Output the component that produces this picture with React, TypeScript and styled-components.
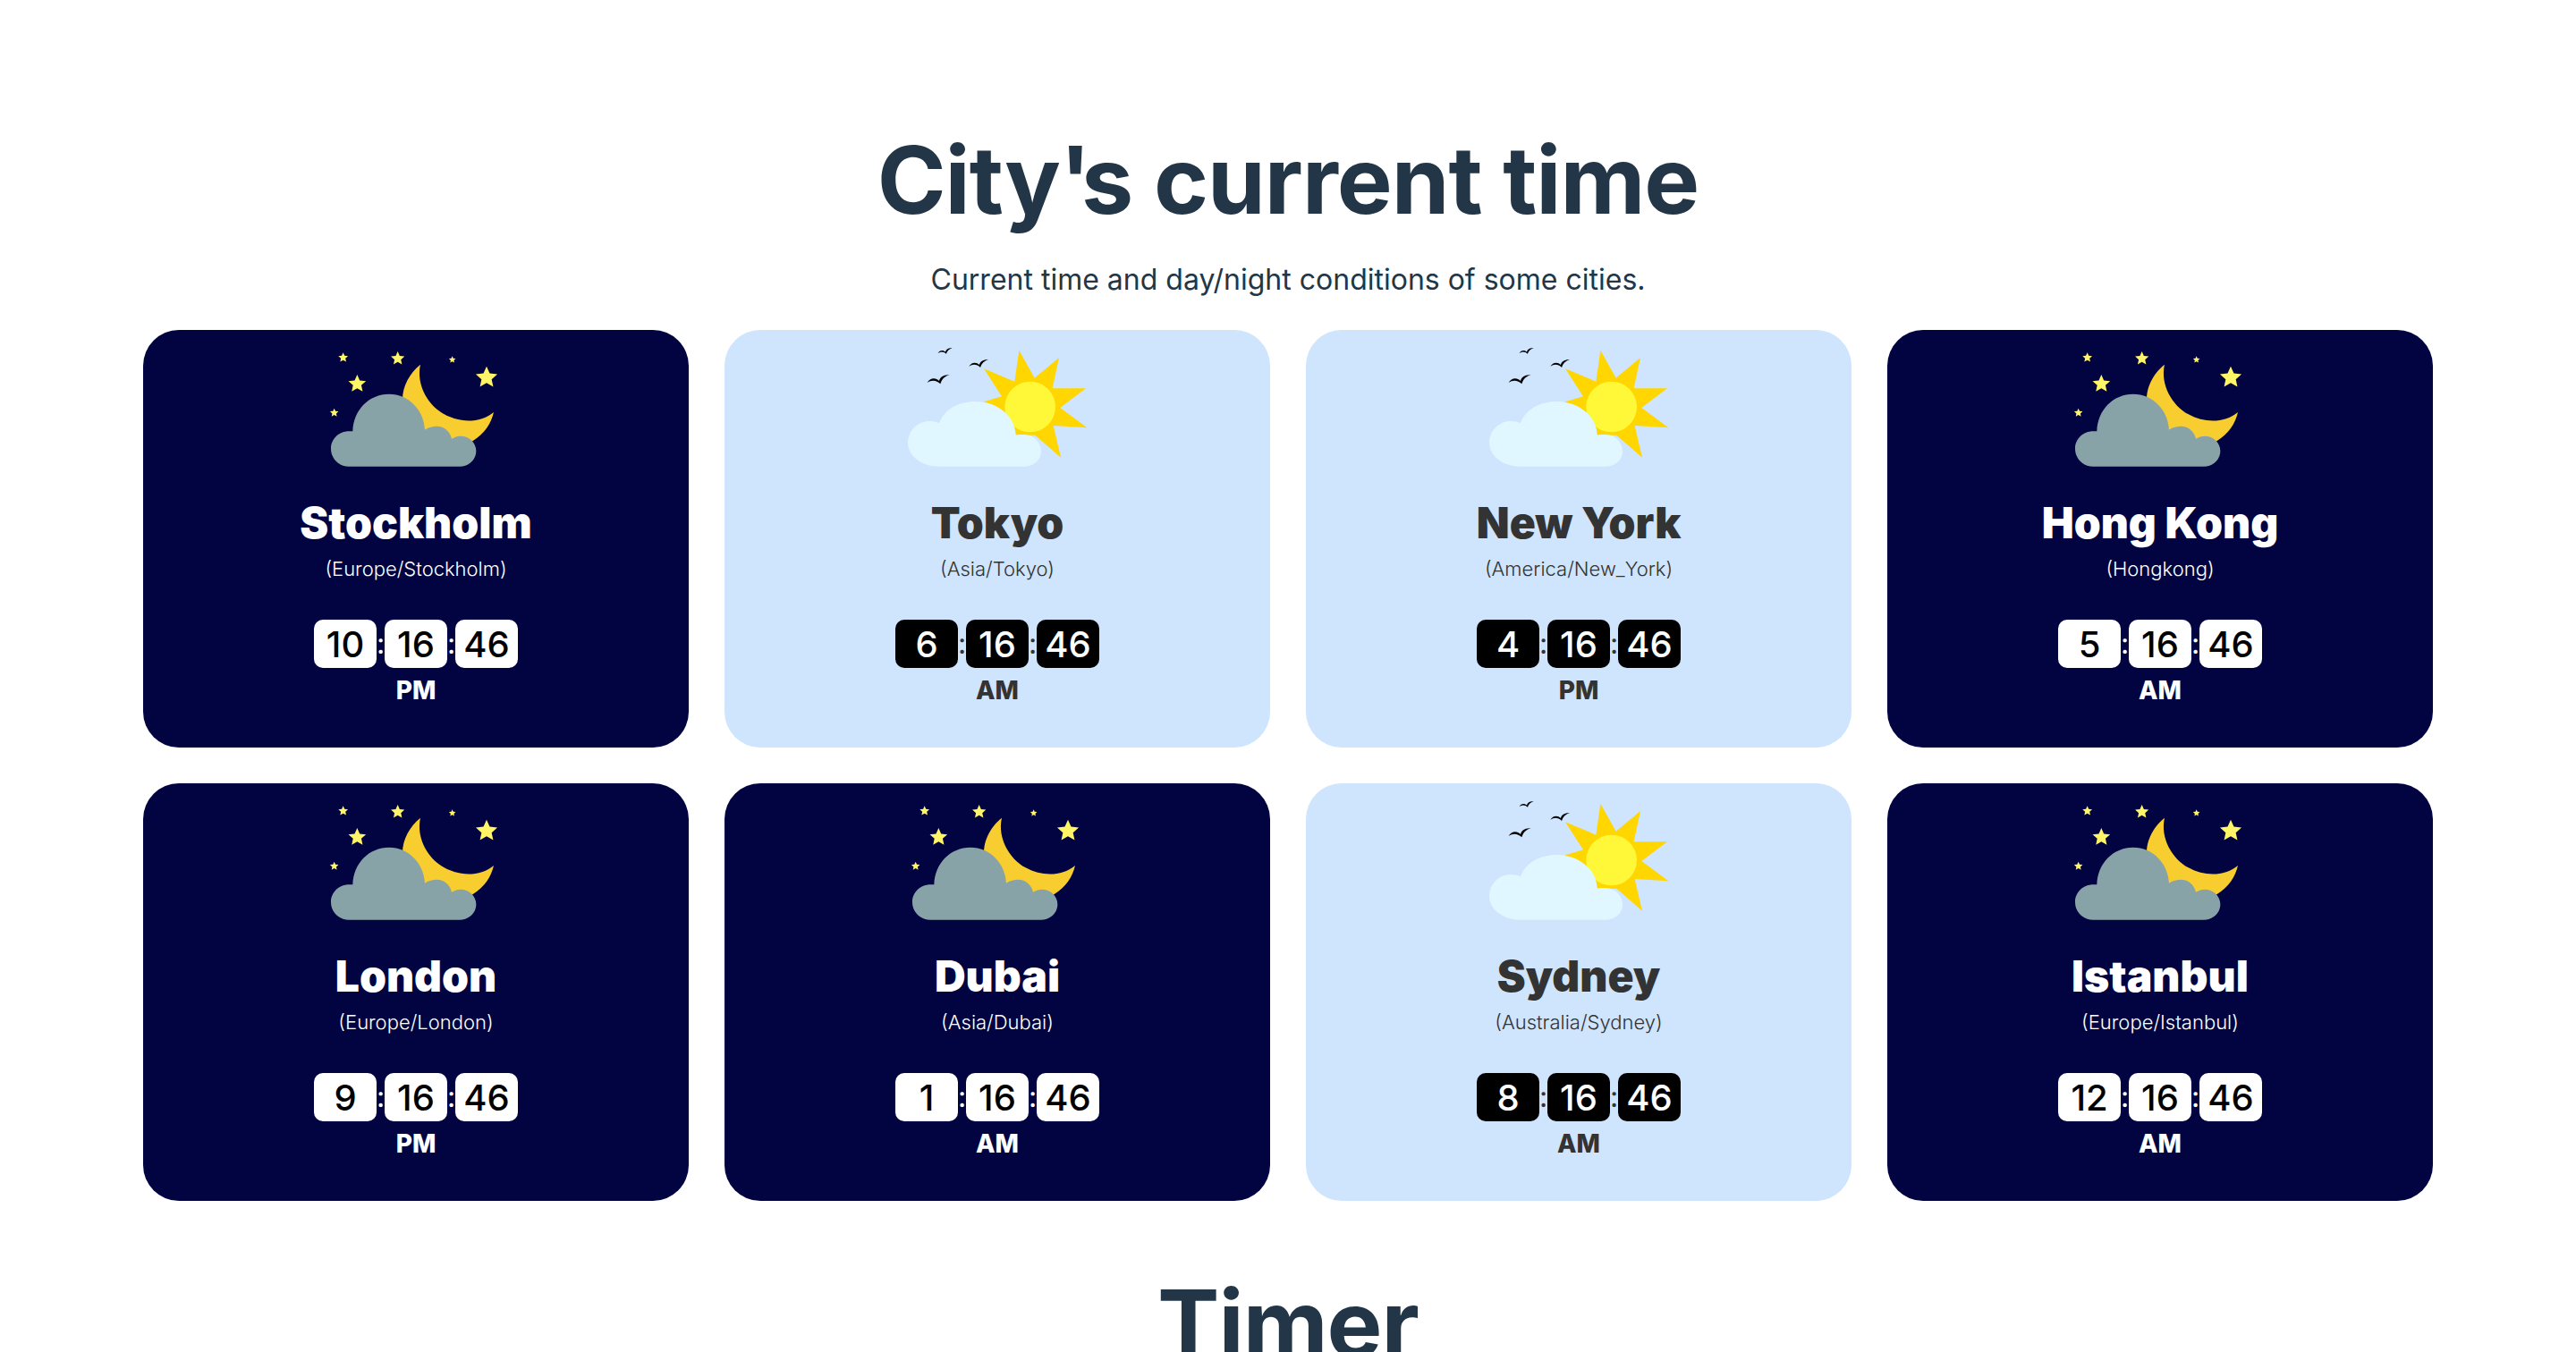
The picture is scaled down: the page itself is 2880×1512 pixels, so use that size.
import React from 'react'
import styled, { createGlobalStyle } from 'styled-components';

const GlobalStyle = createGlobalStyle`
  * {
    box-sizing: border-box;
  }

  html, body {
    margin: 0;
    height: 100%;
    overflow: hidden;
    background: #fff;
    font-family: Inter, "Liberation Sans", sans-serif;
  }
`

const Page = styled.main`
  display: flex;
  flex-direction: column;
  align-items: center;
  padding: 0 160px;
`

const Title = styled.h1`
  margin: 138px 0 0;
  font-size: 104px;
  line-height: 126px;
  font-weight: 700;
  letter-spacing: -1px;
  color: #233648;
`

/* the apostrophe sits much closer to the s in the reference */
const Apostrophe = styled.span`
  letter-spacing: -11px;
`

const Subtitle = styled.p`
  margin: 25px 0 0;
  font-size: 32px;
  line-height: 48px;
  font-weight: 400;
  color: #233648;
`

const Grid = styled.section`
  display: grid;
  grid-template-columns: repeat(4, 1fr);
  gap: 40px;
  width: 100%;
  margin-top: 32px;
`

const Card = styled.article<{ $night: boolean }>`
  display: flex;
  flex-direction: column;
  align-items: center;
  height: 467px;
  padding-top: 1px;
  border-radius: 40px;
  background: ${props => props.$night ? '#010440' : '#cfe4fd'};
  color: ${props => props.$night ? '#fff' : '#333'};
`

const Art = styled.svg`
  display: block;
  width: 240px;
  height: 170px;
  transform: translateX(-5px);
`

const City = styled.h2`
  margin: 16px 0 0;
  font-size: 48px;
  line-height: 58px;
  font-weight: 900;
`

const Zone = styled.span`
  margin-top: 6px;
  font-size: 22px;
  line-height: 32px;
  font-weight: 350;
`

const Clock = styled.div`
  display: flex;
  align-items: center;
  margin-top: 41px;
`

const Digit = styled.span<{ $night: boolean }>`
  display: flex;
  align-items: center;
  justify-content: center;
  width: 70px;
  height: 54px;
  border-radius: 10px;
  font-size: 40px;
  font-weight: 500;
  background: ${props => props.$night ? '#fff' : '#000'};
  color: ${props => props.$night ? '#000' : '#fff'};
`

const Colon = styled.span`
  width: 9px;
  display: flex;
  justify-content: center;
  font-size: 32px;
  font-weight: 400;
  line-height: 54px;
`

const Period = styled.span`
  margin-top: 8px;
  font-size: 28px;
  line-height: 34px;
  font-weight: 800;
`

const NextTitle = styled(Title)`
  margin-top: 74px;
`

const starPoints = (cx: number, cy: number, r: number) => {
  const pts: string[] = [];
  for (let i = 0; i < 10; i++) {
    const radius = i % 2 === 0 ? r : r * 0.47;
    const angle = -Math.PI / 2 + (i * Math.PI) / 5;
    pts.push(`${cx + radius * Math.cos(angle)},${cy + radius * Math.sin(angle)}`);
  }
  return pts.join(' ');
}

const stars: [number, number, number][] = [
  [131, 90, 17],
  [314, 93, 24],
  [497, 97, 12],
  [612, 157, 38],
  [178, 178, 31],
  [101, 275, 15],
];

function NightArt() {
  return (
    <Art viewBox="0 0 720 510">
      {stars.map(([x, y, r]) => (
        <polygon key={`${x}-${y}`} points={starPoints(x, y, r)} fill="#fff566" />
      ))}
      <path
        d="M390 113 C350 145 325 195 331 245 C340 320 420 385 500 390 C530 392 550 380 565 370 C605 345 628 310 636 273 C590 310 525 310 470 280 C415 250 375 180 390 113 Z"
        fill="#f8cd2f"
      />
      <path
        d="M150 455 C115 455 90 428 90 395 C90 362 118 337 150 337 L163 337 C165 265 218 212 285 212 C350 212 402 265 405 332 C418 323 432 320 445 320 C470 320 490 338 495 362 C505 356 515 353 525 353 C553 353 577 375 577 403 C577 432 553 455 522 455 Z"
        fill="#88a3a8"
      />
    </Art>
  );
}

const BIRD = 'M0 28 C8 14 26 8 40 22 C42 10 55 0 75 2 C60 6 50 14 44 32 C30 18 14 18 0 28 Z';

function DayArt() {
  return (
    <Art viewBox="0 0 720 510">
      <path d={BIRD} transform="translate(140 146)" fill="#000" />
      <path d={BIRD} transform="translate(280 95) scale(0.87)" fill="#000" />
      <path d={BIRD} transform="translate(176 57) scale(0.63)" fill="#000" />
      <polygon
        points="448,65 500,158 582,90 560,193 672,193 586,258 676,325 563,318 588,425 502,350 440,350 380,300 330,238 390,220 330,127 433,170"
        fill="#ffd600"
      />
      <circle cx="485" cy="255" r="85" fill="#fff838" />
      <path
        d="M180 455 C120 455 75 420 75 375 C75 335 108 303 147 303 C160 303 170 305 180 310 C195 265 245 237 300 237 C375 237 435 285 437 350 C447 348 456 348 465 348 C497 348 522 373 522 405 C522 433 497 455 465 455 Z"
        fill="#e0f7ff"
      />
    </Art>
  );
}

const cities = [
  { name: 'Stockholm', zone: 'Europe/Stockholm', hour: 10, period: 'PM', night: true },
  { name: 'Tokyo', zone: 'Asia/Tokyo', hour: 6, period: 'AM', night: false },
  { name: 'New York', zone: 'America/New_York', hour: 4, period: 'PM', night: false },
  { name: 'Hong Kong', zone: 'Hongkong', hour: 5, period: 'AM', night: true },
  { name: 'London', zone: 'Europe/London', hour: 9, period: 'PM', night: true },
  { name: 'Dubai', zone: 'Asia/Dubai', hour: 1, period: 'AM', night: true },
  { name: 'Sydney', zone: 'Australia/Sydney', hour: 8, period: 'AM', night: false },
  { name: 'Istanbul', zone: 'Europe/Istanbul', hour: 12, period: 'AM', night: true },
];

export default function App() {
  return (
    <Page>
      <GlobalStyle />
      <Title>City<Apostrophe>'</Apostrophe>s current time</Title>
      <Subtitle>Current time and day/night conditions of some cities.</Subtitle>
      <Grid>
        {cities.map(city => (
          <Card key={city.name} $night={city.night}>
            {city.night ? <NightArt /> : <DayArt />}
            <City>{city.name}</City>
            <Zone>({city.zone})</Zone>
            <Clock>
              <Digit $night={city.night}>{city.hour}</Digit>
              <Colon>:</Colon>
              <Digit $night={city.night}>16</Digit>
              <Colon>:</Colon>
              <Digit $night={city.night}>46</Digit>
            </Clock>
            <Period>{city.period}</Period>
          </Card>
        ))}
      </Grid>
      <NextTitle>Timer</NextTitle>
    </Page>
  )
}
